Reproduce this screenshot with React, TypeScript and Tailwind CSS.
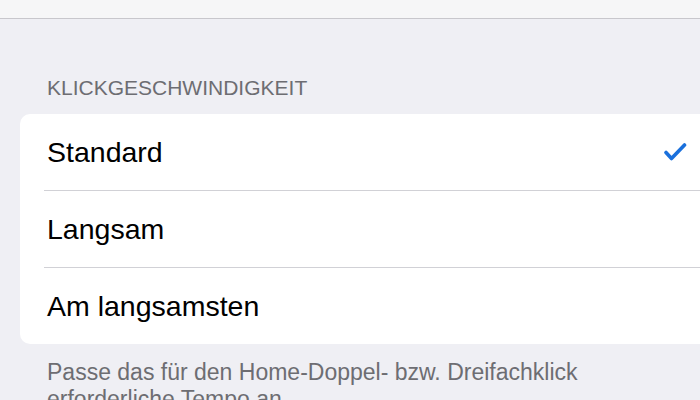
const options = [
  { label: "Standard", selected: true },
  { label: "Langsam", selected: false },
  { label: "Am langsamsten", selected: false },
];

const CheckMark = () => (
  <svg width="24" height="20" viewBox="0 0 24 20" fill="none">
    <path
      d="M3 10.5 L8.5 16.5 L21.5 3"
      stroke="#1a70dc"
      strokeWidth="3.6"
      strokeLinecap="round"
      strokeLinejoin="round"
    />
  </svg>
);

export default function App() {
  return (
    <div
      className="w-[700px] h-[400px] overflow-hidden bg-[#efeff4] flex flex-col"
      style={{ fontFamily: '"Liberation Sans", Arial, sans-serif' }}
    >
      {/* nav bar, mostly cut off */}
      <div className="h-[19px] shrink-0 bg-[#f6f6f7] border-b border-[#c8c7cc]" />

      <div className="pt-[57px] pl-[47px] text-[21px] leading-[24px] text-[#6d6d72]">
        KLICKGESCHWINDIGKEIT
      </div>

      <div className="mt-[14px] ml-[20px] bg-white rounded-l-[10px]">
        {options.map((opt, i) => (
          <div key={opt.label} className="flex flex-col">
            {i > 0 && <div className="h-px ml-[24px] bg-[#d1d1d6]" />}
            <div className="h-[76px] flex items-center justify-between pl-[27px] pr-[13px]">
              <span className="text-[28.5px] leading-none text-black">{opt.label}</span>
              {opt.selected && <CheckMark />}
            </div>
          </div>
        ))}
      </div>

      <p className="mt-[15px] pl-[47px] pr-[100px] text-[23px] leading-[27px] text-[#6d6d72]">
        Passe das für den Home-Doppel- bzw. Dreifachklick erforderliche Tempo an.
      </p>
    </div>
  );
}
